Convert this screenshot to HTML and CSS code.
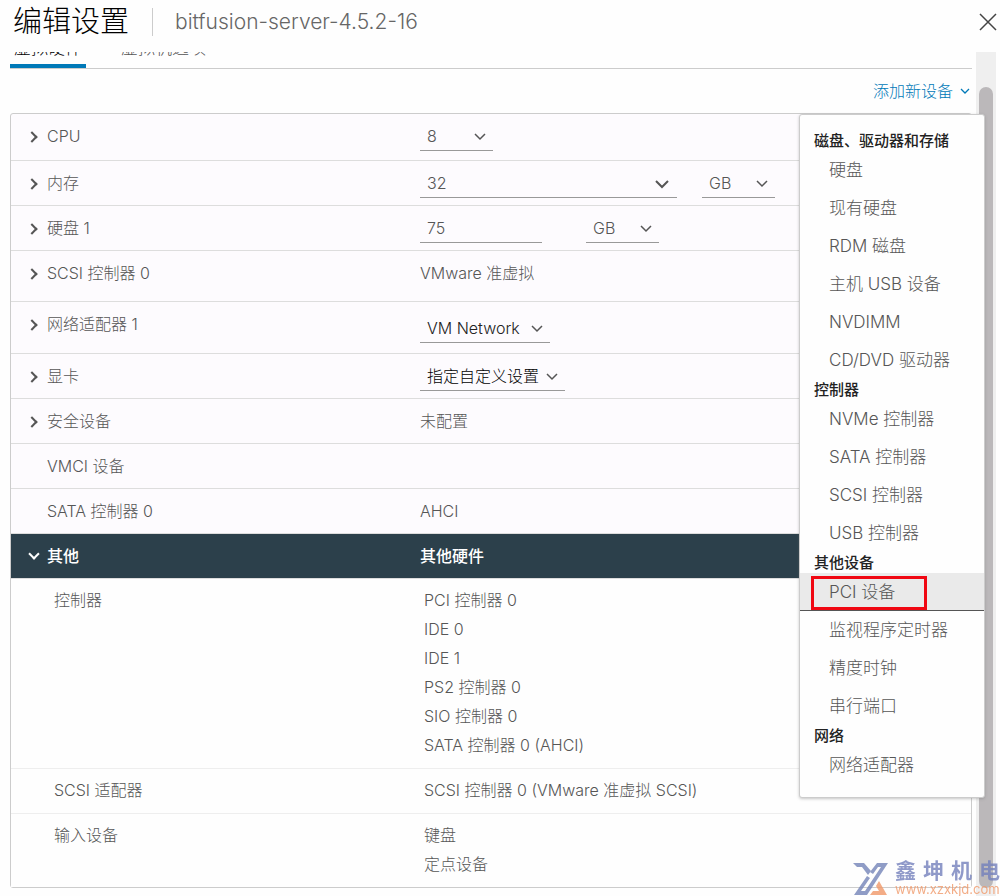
FILE: index.html
```html
<!DOCTYPE html>
<html lang="zh-CN">
<head>
    <meta charset="UTF-8">
    <meta name="viewport" content="width=device-width, initial-scale=1.0">
    <title>编辑设置</title>
    <link rel="stylesheet" href="styles.css">
</head>
<body>
    <div class="dialog">
        <header class="dialog-header">
            <h1>编辑设置</h1>
            <span class="vm-name">bitfusion-server-4.5.2-16</span>
            <button class="close" aria-label="关闭">
                <svg width="18" height="18" viewBox="0 0 18 18"><path d="M1 1 L17 17 M17 1 L1 17"/></svg>
            </button>
        </header>
        <div class="dialog-body">
            <main class="content">
                <nav class="tabs">
                    <button class="tab active">虚拟硬件</button>
                    <button class="tab">虚拟机选项</button>
                </nav>
                <div class="toolbar">
                    <button class="add-device">添加新设备
                        <svg width="10" height="8" viewBox="0 0 10 8"><path d="M1 2 L5 6 L9 2"/></svg>
                    </button>
                    <div class="menu">
                        <h4>磁盘、驱动器和存储</h4>
                        <button>硬盘</button>
                        <button>现有硬盘</button>
                        <button>RDM 磁盘</button>
                        <button>主机 USB 设备</button>
                        <button>NVDIMM</button>
                        <button>CD/DVD 驱动器</button>
                        <h4>控制器</h4>
                        <button>NVMe 控制器</button>
                        <button>SATA 控制器</button>
                        <button>SCSI 控制器</button>
                        <button>USB 控制器</button>
                        <h4>其他设备</h4>
                        <button class="selected">PCI 设备</button>
                        <button>监视程序定时器</button>
                        <button>精度时钟</button>
                        <button>串行端口</button>
                        <h4>网络</h4>
                        <button>网络适配器</button>
                    </div>
                </div>
                <div class="hardware">
                    <div class="row row-cpu">
                        <label class="name caret" for="cpu">CPU</label>
                        <div class="value"><select id="cpu" class="small"><option>8</option></select></div>
                    </div>
                    <div class="row">
                        <label class="name caret" for="memory">内存</label>
                        <div class="value">
                            <input id="memory" class="memory" type="text" value="32">
                            <select class="small" aria-label="内存单位"><option>GB</option></select>
                        </div>
                    </div>
                    <div class="row">
                        <label class="name caret" for="disk">硬盘 1</label>
                        <div class="value disk-value">
                            <input id="disk" class="disk" type="text" value="75">
                            <select class="small" aria-label="硬盘单位"><option>GB</option></select>
                        </div>
                    </div>
                    <div class="row row-scsi">
                        <div class="name caret">SCSI 控制器 0</div>
                        <div class="value">VMware 准虚拟</div>
                    </div>
                    <div class="row row-network">
                        <label class="name caret" for="network">网络适配器 1</label>
                        <div class="value"><select id="network" class="network"><option>VM Network</option></select></div>
                    </div>
                    <div class="row">
                        <label class="name caret" for="video">显卡</label>
                        <div class="value"><select id="video" class="video"><option>指定自定义设置</option></select></div>
                    </div>
                    <div class="row">
                        <div class="name caret">安全设备</div>
                        <div class="value">未配置</div>
                    </div>
                    <div class="row">
                        <div class="name">VMCI 设备</div>
                        <div class="value"></div>
                    </div>
                    <div class="row">
                        <div class="name">SATA 控制器 0</div>
                        <div class="value">AHCI</div>
                    </div>
                    <div class="row open">
                        <div class="name caret">其他</div>
                        <div class="value">其他硬件</div>
                    </div>
                    <div class="row sub">
                        <div class="name">控制器</div>
                        <ul class="value">
                            <li>PCI 控制器 0</li>
                            <li>IDE 0</li>
                            <li>IDE 1</li>
                            <li>PS2 控制器 0</li>
                            <li>SIO 控制器 0</li>
                            <li>SATA 控制器 0 (AHCI)</li>
                        </ul>
                    </div>
                    <div class="row sub">
                        <div class="name">SCSI 适配器</div>
                        <ul class="value">
                            <li>SCSI 控制器 0 (VMware 准虚拟 SCSI)</li>
                        </ul>
                    </div>
                    <div class="row sub">
                        <div class="name">输入设备</div>
                        <ul class="value">
                            <li>键盘</li>
                            <li>定点设备</li>
                        </ul>
                    </div>
                </div>
            </main>
            <div class="scrollbar"><div class="thumb"></div></div>
        </div>
    </div>
    <div class="watermark">
        <svg width="36" height="34" viewBox="0 0 36 34">
            <path class="blue" d="M0 1 H11 L18 9 L15 13 L9 5 H4 Z"/>
            <path class="blue" d="M24 1 H35 L14 33 H1 L14 14 L17 16 L8 29 H12 L28 5 H25 L20 12 L17 10 Z"/>
            <path class="orange" d="M26 19 L34 33 H17 L20 29 H26 L23 24 Z"/>
        </svg>
        <div class="watermark-text">
            <p class="brand">鑫坤机电</p>
            <p class="site">www.xzxkjd.com</p>
        </div>
    </div>
</body>
</html>
```
FILE: styles.css
```css
*, *::before, *::after {
    box-sizing: border-box;
}
body {
    margin: 0;
    background: #fefefe;
    color: #565656;
    font-family: Inter, "Noto Sans CJK SC", sans-serif;
    font-size: 16px;
    font-weight: 300;
    line-height: 24px;
    overflow: hidden;
}
button, select, input {
    font: inherit;
    color: inherit;
    background: none;
    border: none;
    border-radius: 0;
    margin: 0;
    padding: 0;
}
button {
    cursor: pointer;
}
svg path {
    fill: none;
    stroke: currentColor;
}
.dialog {
    min-height: 100vh;
    display: flex;
    flex-direction: column;
}
.dialog-header {
    display: flex;
    align-items: center;
    height: 52px;
    padding: 0 3px 8px 13px;
}
.dialog-header h1 {
    margin: 0;
    padding-right: 23px;
    border-right: 1px solid #ccc;
    color: #000;
    font-size: 29px;
    font-weight: 300;
    line-height: 28px;
}
.vm-name {
    padding-left: 22px;
    font-size: 21px;
    color: #666;
}
.close {
    display: flex;
    margin-left: auto;
    color: #444;
}
.close path {
    stroke-width: 1.5;
}
.dialog-body {
    flex: 1;
    display: flex;
    gap: 4px;
    padding: 0 4px 0 10px;
}
.content {
    flex: 1;
}
/* the tab strip is scrolled half out of view */
.tabs {
    display: flex;
    align-items: flex-end;
    gap: 31px;
    height: 17px;
    overflow: hidden;
    border-bottom: 1px solid #ccc;
}
.tab {
    flex: none;
    padding: 0 4px 4px;
    border-bottom: 4px solid transparent;
    font-size: 17px;
    line-height: 24px;
}
.tab.active {
    color: #000;
    border-bottom-color: #0079b8;
}
.toolbar {
    position: relative;
    display: flex;
    justify-content: flex-end;
    height: 44px;
}
.add-device {
    display: flex;
    align-items: center;
    gap: 7px;
    color: #0079b8;
    font-weight: 300;
    padding-right: 2px;
}
.add-device path {
    stroke-width: 1.3;
}
.menu {
    position: absolute;
    z-index: 2;
    top: 45px;
    right: -13px;
    width: 186px;
    padding: 15px 0 13px;
    background: #fefefe;
    border: 1px solid #ccc;
    border-radius: 3px;
    box-shadow: 0 1px 3px rgba(115, 115, 115, 0.4);
}
.menu h4 {
    margin: 0;
    padding-left: 14px;
    color: #222;
    font-size: 15px;
    font-weight: 500;
    line-height: 21px;
    white-space: nowrap;
}
.menu button {
    display: block;
    position: relative;
    width: 100%;
    height: 38px;
    padding-left: 29px;
    font-size: 17px;
    text-align: left;
}
.menu .selected {
    background: #eaeaea;
    border-bottom: 1px solid #555;
}
.selected::after {
    content: "";
    position: absolute;
    top: 3px;
    left: 11px;
    width: 116px;
    height: 34px;
    border: 3px solid #f00712;
}
.hardware {
    border: 1px solid #ccc;
    border-radius: 3px;
    background: #fdfbfe;
}
.row {
    display: grid;
    grid-template-columns: 17fr 23fr;
    min-height: 45px;
    border-bottom: 1px solid #ddd;
}
.row-cpu {
    min-height: 47px;
}
.row-scsi {
    min-height: 51px;
}
.row-network {
    min-height: 52px;
}
.name {
    position: relative;
    padding: 10px 0 10px 36px;
}
.caret::before {
    content: "";
    position: absolute;
    top: 19px;
    left: 17px;
    width: 8px;
    height: 8px;
    border: solid #555;
    border-width: 2px 2px 0 0;
    transform: rotate(45deg);
}
.value {
    display: flex;
    align-items: flex-start;
    gap: 25px;
    padding: 10px 0 7px 1px;
}
.disk-value {
    gap: 44px;
}
.row-network .value {
    padding-top: 14px;
}
select, input {
    height: 27px;
    padding: 0 7px 2px;
    border-bottom: 1px solid #999;
    line-height: 24px;
}
select {
    appearance: none;
    background: url("data:image/svg+xml,%3Csvg xmlns='http://www.w3.org/2000/svg' width='12' height='8'%3E%3Cpath d='M1 1 L6 6 L11 1' fill='none' stroke='%23555' stroke-width='1.5'/%3E%3C/svg%3E") no-repeat right 7px top 9px;
}
.small {
    width: 73px;
}
.memory {
    width: 257px;
    background: url("data:image/svg+xml,%3Csvg xmlns='http://www.w3.org/2000/svg' width='14' height='10'%3E%3Cpath d='M1 1 L7 7 L13 1' fill='none' stroke='%23555' stroke-width='2'/%3E%3C/svg%3E") no-repeat right 8px top 9px;
}
.disk {
    width: 122px;
}
.network {
    width: 130px;
    color: #222;
}
.video {
    width: 145px;
    color: #000;
}
.open {
    background: #2c404b;
    color: #fff;
    font-weight: 500;
}
.open .caret::before {
    top: 16px;
    left: 19px;
    border-color: #fff;
    transform: rotate(135deg);
}
.sub {
    background: #fefefe;
    line-height: 29px;
    border-bottom-color: #eee;
}
.sub:last-child {
    border-bottom: none;
}
.sub .name {
    padding: 7px 0 8px 43px;
}
.sub .value {
    display: block;
    margin: 0;
    padding: 7px 0 8px 5px;
    list-style: none;
}
.scrollbar {
    width: 20px;
    padding: 35px 3px 8px;
    background: #efefef;
}
.thumb {
    height: 100%;
    border-radius: 7px;
    background: #bbb8ba;
}
.watermark {
    position: fixed;
    z-index: 3;
    right: 0;
    bottom: 0;
    display: flex;
    align-items: flex-end;
    gap: 6px;
    opacity: 0.8;
}
.watermark .blue {
    fill: #7484b8;
    stroke: none;
}
.watermark .orange {
    fill: #f09868;
    stroke: none;
}
.watermark p {
    margin: 0;
}
.watermark-text {
    width: 105px;
}
.brand {
    color: #7480bc;
    font-size: 21px;
    font-weight: 700;
    line-height: 22px;
    text-align-last: justify;
}
.site {
    color: #f09868;
    font-size: 13px;
    font-weight: 400;
    line-height: 14px;
}
```
